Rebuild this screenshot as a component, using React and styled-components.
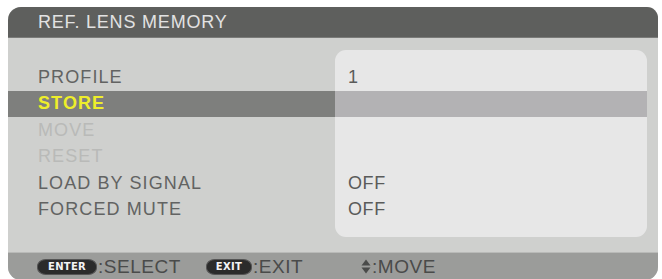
import styled, { createGlobalStyle } from 'styled-components';

const GlobalStyle = createGlobalStyle`
  html, body {
    margin: 0;
    padding: 0;
    background: #ffffff;
  }
  body {
    font-family: 'Liberation Sans', Arial, sans-serif;
  }
`;

const Page = styled.div`
  width: 662px;
  height: 279px;
  padding: 7px 4px 0 8px;
  box-sizing: border-box;
  overflow: hidden;
`;

const Panel = styled.div`
  width: 650px;
  display: flex;
  flex-direction: column;
  border-radius: 13px 11px 13px 13px;
  overflow: hidden;
  background: #cfd0ce;
`;

const TitleBar = styled.div`
  height: 30px;
  background: #5e5f5d;
  color: #e2e2e2;
  font-size: 18px;
  letter-spacing: 0.8px;
  line-height: 30px;
  padding-left: 30px;
  border-bottom: 1px solid #7a7b79;
`;

const Body = styled.div`
  display: grid;
  grid-template-columns: 327px 312px;
  grid-template-rows: 14px repeat(6, 26.5px) 14px;
  padding: 12px 11px 15px 0;
`;

const ValueBox = styled.div`
  grid-column: 2;
  grid-row: 1 / -1;
  background: #e7e7e7;
  border-radius: 11px;
`;

const Highlight = styled.div`
  grid-row: ${(p) => p.$row};
  grid-column: ${(p) => p.$col};
  background: ${(p) => (p.$col === 1 ? '#7e7f7d' : '#b3b2b4')};
`;

const Label = styled.div`
  grid-column: 1;
  grid-row: ${(p) => p.$row};
  padding-left: 30px;
  display: flex;
  align-items: center;
  font-size: 18px;
  letter-spacing: 1.1px;
  color: ${(p) =>
    p.$state === 'active' ? '#eeee2a' : p.$state === 'disabled' ? '#b9bab8' : '#626362'};
  font-weight: ${(p) => (p.$state === 'active' ? 700 : 400)};
`;

const Value = styled.div`
  grid-column: 2;
  grid-row: ${(p) => p.$row};
  padding-left: 13px;
  display: flex;
  align-items: center;
  font-size: 18px;
  letter-spacing: 0.6px;
  color: #5a5b5a;
`;

const Footer = styled.div`
  height: 27px;
  background: #9b9c9a;
  display: flex;
  align-items: center;
  padding-left: 29px;
  border-top: 1px solid #b9bab8;
`;

const Hint = styled.div`
  display: flex;
  align-items: center;
  margin-right: ${(p) => p.$gap}px;
  font-size: 19px;
  letter-spacing: 0.5px;
  color: #4a4b4a;
`;

const Key = styled.span`
  display: inline-flex;
  align-items: center;
  justify-content: center;
  height: 14px;
  padding: 0 ${(p) => p.$pad}px;
  background: #2b2b2b;
  border: 1px solid #555;
  border-radius: 9px / 7px;
  color: #f4f4f4;
  font-family: 'DejaVu Sans', sans-serif;
  font-weight: 700;
  font-size: 10px;
  letter-spacing: 0.3px;
  margin-right: 1px;
`;

const MoveIcon = () => (
  <svg width="10" height="15" viewBox="0 0 10 15" style={{ marginRight: 1 }}>
    <path d="M5 0.5 L9.5 6.5 L0.5 6.5 Z" fill="#4a4b4a" />
    <path d="M5 14.5 L9.5 8.5 L0.5 8.5 Z" fill="#4a4b4a" />
  </svg>
);

const rows = [
  { label: 'PROFILE', value: '1' },
  { label: 'STORE', state: 'active' },
  { label: 'MOVE', state: 'disabled' },
  { label: 'RESET', state: 'disabled' },
  { label: 'LOAD BY SIGNAL', value: 'OFF' },
  { label: 'FORCED MUTE', value: 'OFF' },
];

export default function App() {
  return (
    <>
      <GlobalStyle />
      <Page>
        <Panel>
          <TitleBar>REF. LENS MEMORY</TitleBar>
          <Body>
            <ValueBox />
            <Highlight $row={3} $col={1} />
            <Highlight $row={3} $col={2} />
            {rows.map((r, i) => (
              <Label key={r.label} $row={i + 2} $state={r.state}>
                {r.label}
              </Label>
            ))}
            {rows.map((r, i) =>
              r.value ? (
                <Value key={r.label} $row={i + 2}>
                  {r.value}
                </Value>
              ) : null
            )}
          </Body>
          <Footer>
            <Hint $gap={25}>
              <Key $pad={10}>ENTER</Key>:SELECT
            </Hint>
            <Hint $gap={58}>
              <Key $pad={9}>EXIT</Key>:EXIT
            </Hint>
            <Hint $gap={0}>
              <MoveIcon />:MOVE
            </Hint>
          </Footer>
        </Panel>
      </Page>
    </>
  );
}
